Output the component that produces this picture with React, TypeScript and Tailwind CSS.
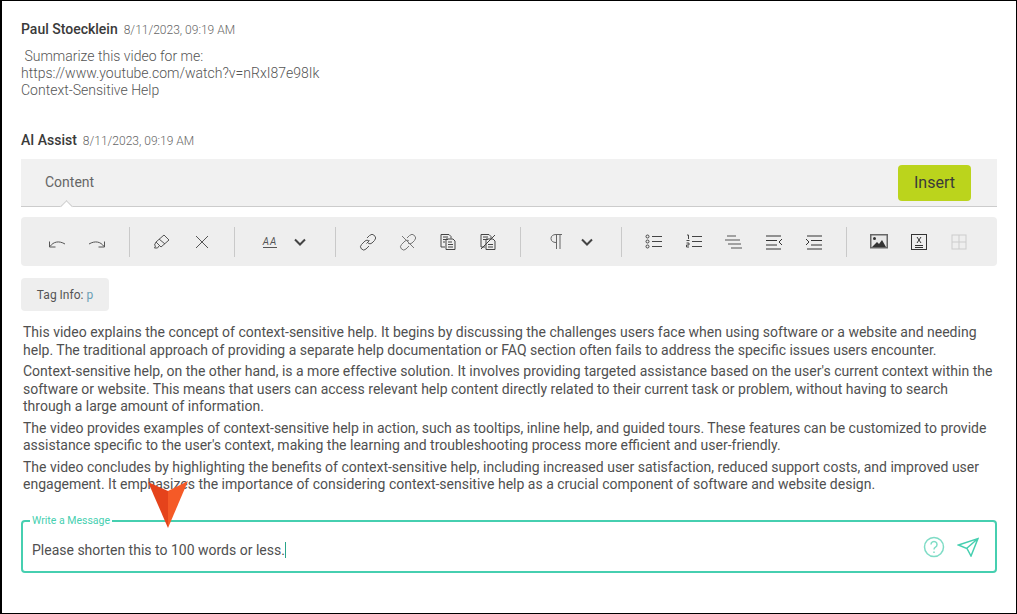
import type { ReactNode } from 'react'

const PARAGRAPHS = [
  "This video explains the concept of context-sensitive help. It begins by discussing the challenges users face when using software or a website and needing help. The traditional approach of providing a separate help documentation or FAQ section often fails to address the specific issues users encounter.",
  "Context-sensitive help, on the other hand, is a more effective solution. It involves providing targeted assistance based on the user's current context within the software or website. This means that users can access relevant help content directly related to their current task or problem, without having to search through a large amount of information.",
  "The video provides examples of context-sensitive help in action, such as tooltips, inline help, and guided tours. These features can be customized to provide assistance specific to the user's context, making the learning and troubleshooting process more efficient and user-friendly.",
  "The video concludes by highlighting the benefits of context-sensitive help, including increased user satisfaction, reduced support costs, and improved user engagement. It emphasizes the importance of considering context-sensitive help as a crucial component of software and website design.",
]

function Icon({ children, className = 'text-[#555]' }: { children: ReactNode; className?: string }) {
  return (
    <svg width="20" height="20" viewBox="0 0 20 20" fill="none" stroke="currentColor" strokeWidth="1" className={className}>
      {children}
    </svg>
  )
}

function Tool({ children, w = 'w-10' }: { children: ReactNode; w?: string }) {
  return <div className={`flex h-10 shrink-0 items-center justify-center ${w}`}>{children}</div>
}

function Sep() {
  return <div className="mx-3 h-[30px] w-px shrink-0 bg-[#c9c9c9]" />
}

function Chevron() {
  return (
    <svg width="12" height="8" viewBox="0 0 12 8" fill="none" stroke="#444" strokeWidth="2" className="shrink-0">
      <path d="M1 1.500l5 5 5-5" />
    </svg>
  )
}

function Toolbar() {
  return (
    <div className="mt-2.5 flex h-[49px] items-center rounded-sm bg-[#eeeeee] pl-4">
      <Tool>
        <Icon><path d="M2.500 9.500V15H8.500M3 14.500C6.500 9.500 12 8.500 18 12" /></Icon>
      </Tool>
      <Tool>
        <Icon><path d="M17.500 9.500V15H11.500M17 14.500C13.500 9.500 8 8.500 2 12" /></Icon>
      </Tool>
      <Sep />
      <Tool>
        <Icon><path d="M12 3l5 5-8 7-5-5zM7 7l6 5M4 10l-1.500 3 1 1-1 2h3l1.500-2" /></Icon>
      </Tool>
      <Tool>
        <Icon><path d="M4 4l12 12M16 4L4 16" /></Icon>
      </Tool>
      <Sep />
      <Tool w="w-[46px]">
        <div className="border-b border-[#555] text-[10px] italic leading-[11px] tracking-[1px] text-[#555]">AA</div>
      </Tool>
      <Tool w="w-[14px]"><Chevron /></Tool>
      <div className="w-[16px]" />
      <Sep />
      <Tool>
        <Icon><path d="M8.500 11.500l3-3M9 6l2.500-2.500a3 3 0 0 1 5 5L14 11a3 3 0 0 1-4 0M11 9a3 3 0 0 0-4 0l-3.500 3.500a3 3 0 0 0 4.500 4.500L11 14" /></Icon>
      </Tool>
      <Tool>
        <Icon className="text-[#777]"><path d="M9 6l2.500-2.500a3 3 0 0 1 5 5L14 11a3 3 0 0 1-4 0M11 9a3 3 0 0 0-4 0l-3.500 3.500a3 3 0 0 0 4.500 4.500L11 14M4 4l12 12" /></Icon>
      </Tool>
      <Tool>
        <Icon className="text-[#444]"><path d="M3 2.500h8l2 2v2M3 2.500V15h4M5 5h5M5 7.500h5M5 10h2M8 7h7l2 2v8.500H8zM10 10h4M10 12.500h5M10 15h5" /></Icon>
      </Tool>
      <Tool>
        <Icon className="text-[#444]"><path d="M3 2.500h8l2 2v2M3 2.500V15h4M5 5h5M5 7.500h5M8 7h7l2 2v8.500H8zM10 12.500h5M10 15h5M3 17L17 3" /></Icon>
      </Tool>
      <Sep />
      <Tool w="w-[48px]">
        <Icon className="text-[#666]"><path d="M9 10.500C6 10.500 4 9 4 6.500S6 2.500 9 2.500h6M9.500 2.500V17M13 2.500V17" /></Icon>
      </Tool>
      <Tool w="w-[12px]"><Chevron /></Tool>
      <div className="w-[16px]" />
      <Sep />
      <Tool>
        <Icon className="text-[#444]"><circle cx="3.500" cy="4.500" r="1.500" /><circle cx="3.500" cy="9.500" r="1.500" /><circle cx="3.500" cy="14.500" r="1.500" /><path d="M8 4.500h10M8 9.500h10M8 14.500h10" /></Icon>
      </Tool>
      <Tool>
        <Icon className="text-[#444]"><path d="M3 3h1.500v4M2.500 8.500h3M2.500 11h2.500v2H2.500v2H5M8 4.500h10M8 9.500h10M8 14.500h10" /></Icon>
      </Tool>
      <Tool>
        <Icon className="text-[#555]"><path d="M3 4h9M1 8h15M4 12h13M7 16h11" /></Icon>
      </Tool>
      <Tool>
        <Icon className="text-[#333]"><path d="M2 4h15M2 8.500h11M2 13h11M2 17h15M18 7l-3 3 3 3" /></Icon>
      </Tool>
      <Tool>
        <Icon className="text-[#333]"><path d="M3 4h15M7 8.500h11M7 13h11M3 17h15M2 7l3 3-3 3" /></Icon>
      </Tool>
      <Sep />
      <Tool>
        <svg width="18" height="15" viewBox="0 0 18 15">
          <rect x="0.750" y="0.750" width="16.500" height="13" fill="#e8e8e8" stroke="#666" strokeWidth="1.500" />
          <circle cx="4.500" cy="4.500" r="1.500" fill="#333" />
          <path d="M2 13l5-5 2 2 3-4 4 7z" fill="#333" />
        </svg>
      </Tool>
      <Tool>
        <Icon className="text-[#333]">
          <rect x="2.500" y="2.500" width="15" height="15" />
          <path d="M8 5l4 6M12 5l-4 6M6 13.500h8M6 15.500h8" />
        </Icon>
      </Tool>
      <Tool>
        <Icon className="text-[#ccc]"><rect x="3" y="3" width="14" height="14" /><path d="M3 10h14M10 3v14" /></Icon>
      </Tool>
    </div>
  )
}

function Header({ name, time }: { name: string; time: string }) {
  return (
    <div className="flex items-baseline gap-[6px]">
      <span className="text-[14px] font-medium text-[#3a3a3a]">{name}</span>
      <span className="text-[12px] font-light text-[#666]">{time}</span>
    </div>
  )
}

export default function App() {
  return (
    <div className="relative h-[614px] w-[1017px] overflow-hidden border border-l-2 border-black bg-white pl-[19px] pr-[19px] pt-[18px] font-['Roboto',sans-serif]">
      <Header name="Paul Stoecklein" time="8/11/2023, 09:19 AM" />
      <div className="mt-[8px] text-[14px] font-light leading-[17px] text-[#555]">
        <div>&nbsp;Summarize this video for me:</div>
        <div>https://www.youtube.com/watch?v=nRxI87e98Ik</div>
        <div>Context-Sensitive Help</div>
      </div>

      <div className="mt-[31px]">
        <Header name="AI Assist" time="8/11/2023, 09:19 AM" />
      </div>

      <div className="relative mt-[8px] flex h-[48px] items-center justify-between border-b border-[#cccccc] bg-[#f1f1f1] pl-6 pr-[26px]">
        <span className="text-[14px] text-[#666]">Content</span>
        <button className="flex h-9 w-[73px] items-center justify-center rounded bg-[#bbd41c] text-[16px] text-[#3a3a3a]">Insert</button>
        <div className="absolute -bottom-px left-[41px] h-[9px] w-[9px] translate-y-[4px] rotate-45 border-l border-t border-[#cccccc] bg-white" />
      </div>

      <Toolbar />

      <div className="mt-[12px] flex h-[33px] w-[88px] items-center justify-center rounded-sm bg-[#eeeeee] text-[12px] text-[#555]">
        Tag Info:&nbsp;<span className="text-[#6a9fb5]">p</span>
      </div>

      <div className="mt-[13px] pl-[2px] text-[14px] leading-[17.500px] text-[#505050]">
        {PARAGRAPHS.map((p) => (
          <p key={p} className="mb-[4px]">{p}</p>
        ))}
      </div>

      <fieldset className="mt-[21.500px] flex h-[58px] rounded border-2 border-[#46cfb0] pl-[7px] pr-[16px]">
        <legend className="px-[2px] text-[10.500px] leading-[12px] text-[#46cfb0]">Write a Message</legend>
        <div className="flex h-[40px] w-full items-center justify-between">
          <div className="ml-[2px] mt-[6px] flex items-center text-[14px] text-[#505050]">
            Please shorten this to 100 words or less.
            <span className="h-4 w-px bg-[#2aa58a]" />
          </div>
          <div className="flex items-center gap-[12px]">
            <svg width="22" height="22" viewBox="0 0 22 22" fill="none" stroke="#7fdcc6" strokeWidth="1.500">
              <circle cx="11" cy="11" r="9.500" />
              <path d="M8 8.500a3 3 0 1 1 4.500 2.600c-1 .6-1.500 1.100-1.500 2.400" />
              <path d="M11 15.500v1.500" />
            </svg>
            <svg width="22" height="20" viewBox="0 0 22 20" fill="none" stroke="#46cfb0" strokeWidth="1.500">
              <path d="M1.500 8L21 1.500 14 19l-4-7.500zM21 1.500L9.500 11.500" />
            </svg>
          </div>
        </div>
      </fieldset>

      {/* annotation arrow lying over the text */}
      <svg className="absolute left-[144px] top-[478px]" width="44" height="50" viewBox="0 0 44 50">
        <path d="M2 3l20 9v37z" fill="#e5431b" />
        <path d="M42 2L22 12v37z" fill="#f55a27" />
      </svg>
    </div>
  )
}
